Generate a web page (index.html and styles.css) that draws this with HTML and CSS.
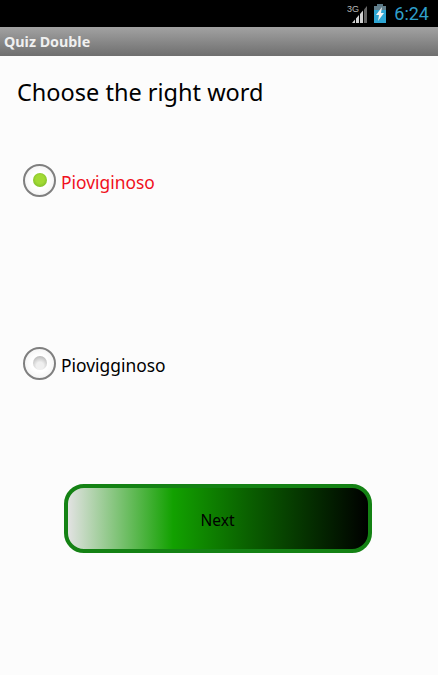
FILE: index.html
```html
<!DOCTYPE html>
<html lang="en">

<head>
  <meta charset="UTF-8">
  <title>Quiz Double</title>
  <link rel="stylesheet" href="styles.css">
</head>

<body>
  <div class="status-bar">
    <svg class="signal" width="21" height="24" viewBox="0 0 21 24">
      <text x="0" y="10" class="net">3G</text>
      <path d="M5 21l3-3.4V21zM9 21v-4.500l3-3.500v8z" fill="#d2d2d2" />
      <path d="M13 21v-9l3-3.500V21z" fill="#d2d2d2" />
      <path d="M17 21V7.400L20 4v17z" fill="#666" />
    </svg>
    <svg class="battery" width="12" height="19" viewBox="0 0 12 19">
      <rect x="3" y="0" width="6" height="2" fill="#5a7886" />
      <rect x="0" y="2" width="12" height="4" fill="#627f8c" />
      <rect x="0" y="6" width="12" height="13" fill="#2ea6d4" />
      <path d="M8 3L2 11h3l-1 6 6-8H7z" fill="#f4f4f4" />
    </svg>
    <span class="clock">6:24</span>
  </div>

  <div class="title-bar">Quiz Double</div>

  <main class="content">
    <h1 class="question">Choose the right word</h1>

    <div class="option option-first">
      <span class="radio radio-on"><span class="dot"></span></span>
      <span class="label label-wrong">Pioviginoso</span>
    </div>

    <div class="option option-second">
      <span class="radio"><span class="dot"></span></span>
      <span class="label">Piovigginoso</span>
    </div>

    <div class="next-wrap">
      <button class="next" type="button">Next</button>
    </div>
  </main>
</body>

</html>
```

FILE: styles.css
```css
* {
  box-sizing: border-box;
}

html,
body {
  margin: 0;
  height: 100%;
}

body {
  width: 438px;
  height: 675px;
  overflow: hidden;
  display: flex;
  flex-direction: column;
  background: #fcfcfc;
  font-family: "Noto Sans", "Open Sans", sans-serif;
}

.status-bar {
  height: 27px;
  flex: none;
  display: flex;
  align-items: center;
  justify-content: flex-end;
  padding-right: 9px;
  background: #000;
}

.signal {
  margin-right: 6px;
}

.net {
  font-family: "Liberation Sans", sans-serif;
  font-size: 9px;
  fill: #b8b8b8;
}

.battery {
  margin-right: 8px;
}

.clock {
  color: #2f9fcb;
  font-family: Roboto, sans-serif;
  font-size: 18px;
  line-height: 27px;
}

.title-bar {
  height: 29px;
  flex: none;
  padding-left: 4px;
  color: #f0f0f0;
  font-size: 14.3px;
  font-weight: bold;
  line-height: 29px;
  background: linear-gradient(180deg, #a2a2a2, #6f6f6f);
}

.content {
  flex: 1;
  display: flex;
  flex-direction: column;
}

.question {
  margin: 20px 0 0 17px;
  color: #000;
  font-size: 23.5px;
  font-weight: normal;
  line-height: 32px;
}

.option {
  display: flex;
  align-items: center;
  margin-left: 23px;
  height: 34px;
}

.option-first {
  margin-top: 55px;
}

.option-second {
  margin-top: 149px;
}

.radio {
  width: 33px;
  height: 33px;
  flex: none;
  display: flex;
  align-items: center;
  justify-content: center;
  border: 2px solid #7f7f7f;
  border-radius: 50%;
  background: radial-gradient(circle, #fff 40%, #ececec 100%);
}

.dot {
  width: 14px;
  height: 14px;
  border-radius: 50%;
  background: radial-gradient(circle at 50% 70%, #f0f0f0 30%, #b0b0b0 90%);
}

.radio-on .dot {
  background: radial-gradient(circle at 50% 45%, #a2da34 40%, #74b424 90%);
}

.label {
  margin-left: 5px;
  margin-top: 4px;
  color: #000;
  font-size: 17.4px;
}

.label-wrong {
  color: #f01020;
}

.next-wrap {
  display: flex;
  justify-content: center;
  margin-top: 104px;
  padding-right: 3px;
}

.next {
  width: 308px;
  height: 69px;
  padding-top: 3px;
  border: 4px solid #148214;
  border-radius: 20px;
  color: #000;
  font-family: inherit;
  font-size: 15.5px;
  background: linear-gradient(90deg, #e2e2e2 0%, #12a100 35%, #0a6000 60%, #000 100%);
}
```
